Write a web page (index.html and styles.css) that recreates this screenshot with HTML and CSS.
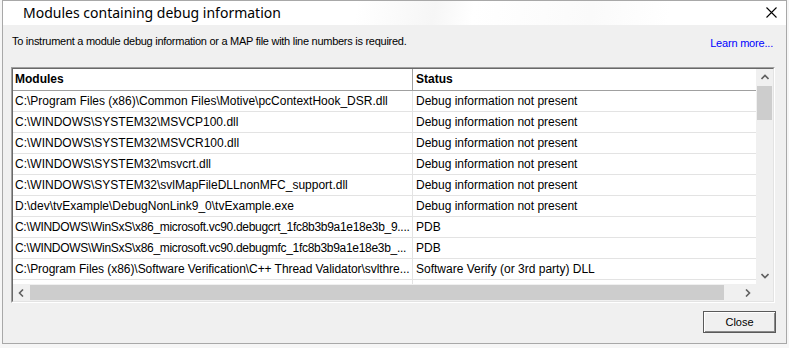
FILE: index.html
```html
<!DOCTYPE html>
<html>
<head>
<meta charset="utf-8">
<link rel="stylesheet" href="styles.css">
</head>
<body>
<div class="window">
  <div class="titlebar">
    <span class="title">Modules containing debug information</span>
    <svg class="closex" width="11" height="11" viewBox="0 0 11 11"><path d="M0.5 0.5 L10.5 10.5 M10.5 0.5 L0.5 10.5" stroke="#000" stroke-width="1.1" fill="none"/></svg>
  </div>
  <div class="content">
    <div class="intro">
      <span class="intro-text">To instrument a module debug information or a MAP file with line numbers is required.</span>
      <span class="learn">Learn more...</span>
    </div>
    <div class="listbox">
      <div class="listinner">
        <div class="mainarea">
          <div class="table">
            <div class="row header"><div class="c1">Modules</div><div class="c2">Status</div></div>
            <div class="row"><div class="c1">C:\Program Files (x86)\Common Files\Motive\pcContextHook_DSR.dll</div><div class="c2">Debug information not present</div></div>
            <div class="row"><div class="c1">C:\WINDOWS\SYSTEM32\MSVCP100.dll</div><div class="c2">Debug information not present</div></div>
            <div class="row"><div class="c1">C:\WINDOWS\SYSTEM32\MSVCR100.dll</div><div class="c2">Debug information not present</div></div>
            <div class="row"><div class="c1">C:\WINDOWS\SYSTEM32\msvcrt.dll</div><div class="c2">Debug information not present</div></div>
            <div class="row"><div class="c1">C:\WINDOWS\SYSTEM32\svlMapFileDLLnonMFC_support.dll</div><div class="c2">Debug information not present</div></div>
            <div class="row"><div class="c1">D:\dev\tvExample\DebugNonLink9_0\tvExample.exe</div><div class="c2">Debug information not present</div></div>
            <div class="row"><div class="c1 tight">C:\WINDOWS\WinSxS\x86_microsoft.vc90.debugcrt_1fc8b3b9a1e18e3b_9....</div><div class="c2">PDB</div></div>
            <div class="row"><div class="c1 tight">C:\WINDOWS\WinSxS\x86_microsoft.vc90.debugmfc_1fc8b3b9a1e18e3b_...</div><div class="c2">PDB</div></div>
            <div class="row"><div class="c1 snug">C:\Program Files (x86)\Software Verification\C++ Thread Validator\svlthre...</div><div class="c2">Software Verify (or 3rd party) DLL</div></div>
            <div class="row"><div class="c1"></div><div class="c2"></div></div>
          </div>
          <div class="hscroll">
            <div class="sbtn"><svg width="7" height="8" viewBox="0 0 7 8"><path d="M5 0.5 L1.5 4 L5 7.5" stroke="#606060" stroke-width="1.6" fill="none"/></svg></div>
            <div class="htrack"><div class="hthumb"></div></div>
            <div class="sbtn"><svg width="7" height="8" viewBox="0 0 7 8"><path d="M2 0.5 L5.5 4 L2 7.5" stroke="#606060" stroke-width="1.6" fill="none"/></svg></div>
          </div>
        </div>
        <div class="vscroll">
          <div class="sbtn"><svg width="8" height="7" viewBox="0 0 8 7"><path d="M0.5 5 L4 1.5 L7.5 5" stroke="#606060" stroke-width="1.6" fill="none"/></svg></div>
          <div class="vtrack"><div class="vthumb"></div></div>
          <div class="sbtn"><svg width="8" height="7" viewBox="0 0 8 7"><path d="M0.5 2 L4 5.5 L7.5 2" stroke="#606060" stroke-width="1.6" fill="none"/></svg></div>
          <div class="corner"></div>
        </div>
      </div>
    </div>
    <div class="footer">
      <button class="btn">Close</button>
    </div>
  </div>
</div>
</body>
</html>
```

FILE: styles.css
```css
html, body {
  margin: 0;
  padding: 0;
  background: #f6f6f6;
}
body {
  width: 789px;
  height: 348px;
  overflow: hidden;
}
.window {
  margin-left: 2px;
  width: 783px;
  height: 342px;
  border: 1px solid #a8a8a8;
  background: #f0f0f0;
  display: flex;
  flex-direction: column;
}
.titlebar {
  height: 24px;
  background: linear-gradient(100deg, #ffffff 0%, #ffffff 45%, #f6f6f6 55%, #ffffff 60%, #fafafa 75%, #ffffff 85%);
  display: flex;
  align-items: center;
  justify-content: space-between;
  padding: 0 9px 0 20px;
  flex: none;
}
.title {
  font-family: "Noto Sans", sans-serif;
  font-size: 14px;
  color: #000;
  margin-top: -2px;
}
.closex {
  display: block;
  margin-top: -2px;
}
.content {
  flex: 1;
  display: flex;
  flex-direction: column;
  padding: 0 10px 0 8px;
}
.intro {
  display: flex;
  justify-content: space-between;
  align-items: flex-start;
  height: 42px;
  padding-top: 10px;
  box-sizing: border-box;
}
.intro-text {
  font-family: "Liberation Sans", sans-serif;
  font-size: 11px;
  letter-spacing: -0.27px;
  color: #000;
  padding-left: 1px;
}
.learn {
  font-family: "Liberation Sans", sans-serif;
  font-size: 11px;
  letter-spacing: -0.2px;
  color: #0000ff;
  margin-top: 2px;
  margin-right: 3px;
}
.listbox {
  width: 764px;
  height: 236px;
  box-sizing: border-box;
  border-top: 1px solid #a0a0a0;
  border-left: 1px solid #a0a0a0;
  border-right: 1px solid #ffffff;
  border-bottom: 1px solid #ffffff;
  flex: none;
}
.listinner {
  height: 100%;
  box-sizing: border-box;
  border-top: 1px solid #696969;
  border-left: 1px solid #696969;
  border-right: 1px solid #e3e3e3;
  border-bottom: 1px solid #e3e3e3;
  display: flex;
  background: #fff;
  overflow: hidden;
}
.mainarea {
  flex: 1;
  display: flex;
  flex-direction: column;
  min-width: 0;
}
.table {
  flex: 1;
  overflow: hidden;
  font-family: "Liberation Sans", sans-serif;
  font-size: 12px;
  color: #000;
}
.row {
  display: flex;
  height: 21px;
  box-sizing: border-box;
  border-bottom: 1px solid #e3e3e3;
  align-items: center;
}
.row .c1 {
  width: 400px;
  flex: none;
  box-sizing: border-box;
  padding-left: 2px;
  white-space: nowrap;
  overflow: hidden;
  height: 100%;
  line-height: 20px;
  border-right: 1px solid #e3e3e3;
}
.row .c1.tight {
  letter-spacing: -0.3px;
}
.row .c1.snug {
  letter-spacing: -0.06px;
}
.row .c2 {
  flex: 1;
  padding-left: 3px;
  white-space: nowrap;
  overflow: hidden;
  height: 100%;
  line-height: 20px;
}
.row.header {
  height: 22px;
  border-bottom: 1px solid #a0a0a0;
  font-weight: bold;
}
.row.header .c1 {
  border-right: 1px solid #a0a0a0;
  line-height: 21px;
}
.row.header .c2 {
  line-height: 21px;
}
.hscroll {
  height: 17px;
  flex: none;
  display: flex;
  background: #f0f0f0;
}
.sbtn {
  width: 17px;
  height: 17px;
  flex: none;
  display: flex;
  align-items: center;
  justify-content: center;
  background: #f0f0f0;
}
.htrack {
  flex: 1;
  padding: 1px 15px 1px 0;
  display: flex;
}
.hthumb {
  flex: 1;
  background: #cdcdcd;
}
.vscroll {
  width: 17px;
  flex: none;
  display: flex;
  flex-direction: column;
  background: #f0f0f0;
}
.vtrack {
  flex: 1;
  padding: 0 1px;
}
.vthumb {
  height: 34px;
  background: #cdcdcd;
}
.corner {
  height: 17px;
  background: #f0f0f0;
}
.footer {
  display: flex;
  justify-content: flex-end;
  padding-top: 8px;
}
.btn {
  width: 73px;
  height: 22px;
  margin: 0;
  padding: 0;
  background: #f0f0f0;
  border: 1px solid #5a5a5a;
  box-shadow: inset 1px 1px 0 #ffffff, inset -1px -1px 0 #8a8a8a;
  font-family: "Liberation Sans", sans-serif;
  font-size: 11px;
  color: #000;
}
```
